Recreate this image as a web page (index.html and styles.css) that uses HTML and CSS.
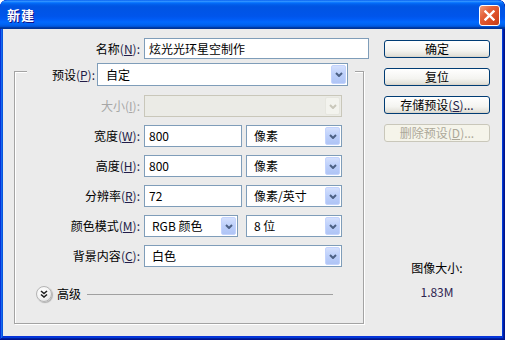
FILE: index.html
```html
<!DOCTYPE html>
<html lang="zh-CN">
<head>
<meta charset="utf-8">
<title>新建</title>
<link rel="stylesheet" href="styles.css">
</head>
<body>
<div class="window">
  <div class="titlebar">
    <span class="title">新建</span>
    <div class="close">
      <svg width="11" height="11" viewBox="0 0 11 11"><path d="M1.5 1.5 L9.5 9.5 M9.5 1.5 L1.5 9.5" stroke="#fff" stroke-width="2.4" stroke-linecap="square"/></svg>
    </div>
  </div>
  <div class="client">
    <div class="main">
      <div class="name-row">
        <span class="lbl name-lbl">名称<span class="m">(<u>N</u>):</span></span>
        <div class="field name-input">炫光光环星空制作</div>
      </div>
      <div class="group">
        <div class="legend">
          <span class="lbl">预设<span class="m">(<u>P</u>):</span></span>
          <div class="field select preset"><span>自定</span><span class="arrow"><svg width="8" height="5" viewBox="0 0 8 5"><polyline points="1,1 4,4 7,1" fill="none" stroke="#4d6185" stroke-width="2"/></svg></span></div>
        </div>
        <div class="form">
          <span class="lbl disabled">大小<span>(<u>I</u>):</span></span>
          <div class="cell"><div class="field select dis full"><span></span><span class="arrow dis-arrow"><svg width="8" height="5" viewBox="0 0 8 5"><polyline points="1,1 4,4 7,1" fill="none" stroke="#c9c7ba" stroke-width="2"/></svg></span></div></div>

          <span class="lbl">宽度<span class="m">(<u>W</u>):</span></span>
          <div class="cell"><div class="field num">800</div><div class="field select unit"><span>像素</span><span class="arrow"><svg width="8" height="5" viewBox="0 0 8 5"><polyline points="1,1 4,4 7,1" fill="none" stroke="#4d6185" stroke-width="2"/></svg></span></div></div>

          <span class="lbl">高度<span class="m">(<u>H</u>):</span></span>
          <div class="cell"><div class="field num">800</div><div class="field select unit"><span>像素</span><span class="arrow"><svg width="8" height="5" viewBox="0 0 8 5"><polyline points="1,1 4,4 7,1" fill="none" stroke="#4d6185" stroke-width="2"/></svg></span></div></div>

          <span class="lbl">分辨率<span class="m">(<u>R</u>):</span></span>
          <div class="cell"><div class="field num">72</div><div class="field select unit"><span>像素/英寸</span><span class="arrow"><svg width="8" height="5" viewBox="0 0 8 5"><polyline points="1,1 4,4 7,1" fill="none" stroke="#4d6185" stroke-width="2"/></svg></span></div></div>

          <span class="lbl">颜色模式<span class="m">(<u>M</u>):</span></span>
          <div class="cell"><div class="field select mode"><span>RGB 颜色</span><span class="arrow"><svg width="8" height="5" viewBox="0 0 8 5"><polyline points="1,1 4,4 7,1" fill="none" stroke="#4d6185" stroke-width="2"/></svg></span></div><div class="field select unit"><span>8 位</span><span class="arrow"><svg width="8" height="5" viewBox="0 0 8 5"><polyline points="1,1 4,4 7,1" fill="none" stroke="#4d6185" stroke-width="2"/></svg></span></div></div>

          <span class="lbl">背景内容<span class="m">(<u>C</u>):</span></span>
          <div class="cell"><div class="field select full"><span>白色</span><span class="arrow"><svg width="8" height="5" viewBox="0 0 8 5"><polyline points="1,1 4,4 7,1" fill="none" stroke="#4d6185" stroke-width="2"/></svg></span></div></div>
        </div>
        <div class="adv">
          <span class="adv-icon"><svg width="8" height="8" viewBox="0 0 8 8"><polyline points="1,1 4,3.5 7,1" fill="none" stroke="#222" stroke-width="1.6"/><polyline points="1,4.5 4,7 7,4.5" fill="none" stroke="#222" stroke-width="1.6"/></svg></span>
          <span class="adv-text">高级</span>
          <div class="adv-line"></div>
        </div>
      </div>
    </div>
    <div class="side">
      <div class="btn">确定</div>
      <div class="btn">复位</div>
      <div class="btn">存储预设<span class="m">(<u>S</u>)...</span></div>
      <div class="btn btn-dis">删除预设<span>(<u>D</u>)...</span></div>
      <div class="info info-title">图像大小:</div>
      <div class="info info-val">1.83M</div>
    </div>
  </div>
</div>
</body>
</html>
```

FILE: styles.css
```css
html, body {
  margin: 0;
  padding: 0;
  background: #ffffff;
}

.window {
  width: 505px;
  height: 340px;
  display: flex;
  flex-direction: column;
  background: #0831d9;
  box-shadow: inset -1px -1px #00138c, inset 1px 1px #0831d9, inset -2px -2px #001ea0, inset 2px 2px #166aee, inset -3px -3px #003bda, inset 3px 3px #0855dd;
  border-radius: 7px 7px 0 0;
  overflow: hidden;
  font-family: "Noto Sans CJK SC", "DejaVu Sans", sans-serif;
  font-size: 12px;
  line-height: 16px;
  color: #000;
}

.titlebar {
  flex: none;
  height: 29px;
  box-sizing: border-box;
  display: flex;
  align-items: center;
  justify-content: space-between;
  padding: 0 5px 0 7px;
  background: linear-gradient(180deg, #0058ee 0%, #3593ff 4%, #288eff 6%, #127dff 8%, #036ffc 10%, #0262ee 14%, #0057e5 20%, #0054e3 24%, #0055eb 56%, #005bf5 66%, #026afe 76%, #0062ef 86%, #0052d6 92%, #0040ab 94%, #003092 100%);
  border-radius: 7px 7px 0 0;
}

.title {
  color: #fff;
  font-weight: bold;
  font-size: 13px;
  letter-spacing: 1px;
  text-shadow: 1px 1px #0f1089;
  margin-top: 1px;
}

.close {
  width: 21px;
  height: 21px;
  box-sizing: border-box;
  border: 1px solid #fff;
  border-radius: 3px;
  background: linear-gradient(135deg, #f29a78 0%, #e4613a 35%, #d94a22 70%, #c23c18 100%);
  display: flex;
  align-items: center;
  justify-content: center;
  margin-top: 1px;
}

.client {
  flex: 1;
  margin: 0 3px 4px 3px;
  background: #ebebeb;
  display: flex;
}

.main {
  width: 381px;
  padding-top: 9px;
}

.lbl {
  white-space: nowrap;
}

.m {
  color: #221c48;
}

.disabled {
  color: #a7a7a7;
}

.name-row {
  display: flex;
  align-items: center;
  gap: 4px;
}

.name-lbl {
  width: 137px;
  text-align: right;
}

.field {
  box-sizing: border-box;
  height: 22px;
  border: 1px solid #7f9db9;
  background: #fff;
  display: flex;
  align-items: center;
  padding-left: 4px;
  white-space: nowrap;
}

.name-input {
  width: 225px;
  height: 21px;
}

.group {
  margin: 12px 0 0 11px;
  width: 350px;
  box-sizing: border-box;
  border: 1px solid #a3a3a3;
  box-shadow: inset 1px 1px 0 #fff, 1px 1px 0 #fff;
  padding-bottom: 21px;
}

.legend {
  margin: -9px 0 0 12px;
  width: 328px;
  box-sizing: border-box;
  height: 23px;
  padding: 0 7px 0 0;
  background: #ebebeb;
  display: flex;
  align-items: center;
  justify-content: flex-end;
  gap: 2px;
}

.select {
  padding-left: 7px;
  padding-right: 1px;
  justify-content: space-between;
}

.preset {
  width: 251px;
  height: 23px;
  padding-left: 8px;
}

.arrow {
  width: 15px;
  align-self: stretch;
  margin: 1px 0;
  box-sizing: border-box;
  border: 1px solid #c3d3fd;
  border-radius: 2px;
  background: linear-gradient(180deg, #d4e0fd 0%, #bccffa 50%, #afc4f5 100%);
  display: flex;
  align-items: center;
  justify-content: center;
}

.dis {
  border-color: #c9c7ba;
  background: #ebebe6;
}

.dis-arrow {
  border-color: #e6e6df;
  background: #f3f3ee;
}

.form {
  margin-top: 9px;
  display: grid;
  grid-template-columns: 125px 198px;
  grid-auto-rows: 22px;
  column-gap: 4px;
  row-gap: 8px;
}

.form .lbl {
  text-align: right;
  align-self: center;
}

.cell {
  display: flex;
  justify-content: space-between;
}

.full {
  width: 198px;
}

.num {
  width: 98px;
  padding-left: 4px;
}

.unit {
  width: 96px;
}

.mode {
  width: 94px;
}

.adv {
  margin-top: 19px;
  height: 16px;
  display: flex;
  align-items: center;
  padding: 0 30px 0 21px;
}

.adv-icon {
  flex: none;
  width: 16px;
  height: 16px;
  box-sizing: border-box;
  border-radius: 50%;
  border: 1px solid #b4b4b4;
  background: radial-gradient(circle at 40% 35%, #ffffff 0%, #f4f4f4 50%, #d8d8d8 100%);
  box-shadow: 1px 1px 1px rgba(0, 0, 0, 0.25);
  display: flex;
  align-items: center;
  justify-content: center;
}

.adv-text {
  flex: none;
  margin-left: 5px;
}

.adv-line {
  flex: 1 1 auto;
  min-width: 10px;
  height: 0;
  border-top: 1px solid #a0a0a0;
  margin-left: 6px;
}

.side {
  width: 106px;
  padding-top: 11px;
  display: flex;
  flex-direction: column;
  gap: 10px;
}

.btn {
  height: 18px;
  box-sizing: border-box;
  border: 1px solid #003c74;
  border-radius: 3px;
  background: linear-gradient(180deg, #ffffff 0%, #f4f4f0 60%, #e3e2da 90%, #d6d0c5 100%);
  display: flex;
  align-items: center;
  justify-content: center;
  white-space: nowrap;
}

.btn-dis {
  border-color: #c9c7ba;
  background: #f5f4ea;
  color: #aca899;
}

.info {
  text-align: center;
}

.info-title {
  margin-top: 108px;
}

.info-val {
  margin-top: -2px;
  color: #2e2450;
}
```
